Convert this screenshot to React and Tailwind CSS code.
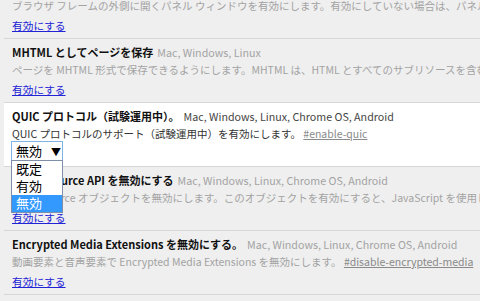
import React from 'react';

const font = { fontFamily: '"Noto Sans CJK JP", "Noto Sans", sans-serif' };

function Link({ children }) {
  return <span className="text-[#2323d6] underline">{children}</span>;
}

function Section({ title, platforms, desc, hash, active, children, className = '' }) {
  const muted = !active;
  return (
    <div
      className={`h-[64px] border-b border-[#d6d6d6] pl-[8px] pt-[5px] whitespace-nowrap ${active ? 'bg-white' : ''} ${className}`}
    >
      <div className="h-[17px] leading-[17px] text-[11px]">
        <span className="font-bold text-[#111]">{title}</span>
        <span className={`ml-[4px] text-[10.7px] ${muted ? 'text-[#a3a3a3]' : 'text-[#444]'}`}>{platforms}</span>
      </div>
      <div className={`h-[17px] leading-[17px] text-[10.5px] ${muted ? 'text-[#a3a3a3]' : 'text-[#333]'}`}>
        {desc}
        {hash && (
          <>
            {' '}
            <span className="text-[#8a8a8a] underline">{hash}</span>
          </>
        )}
      </div>
      {children || (
        <div className="mt-[3px] h-[17px] leading-[17px] text-[10.7px]">
          <Link>有効にする</Link>
        </div>
      )}
    </div>
  );
}

export default function App() {
  const platforms = 'Mac, Windows, Linux, Chrome OS, Android';
  return (
    <div className="w-[480px] h-[301px] overflow-hidden bg-[#efefef] text-[11px]" style={font}>
      <div className="ml-[4px] -mt-[25px]">
        <Section
          title="パネルを有効にする"
          platforms="Mac, Windows, Linux"
          desc="ブラウザ フレームの外側に開くパネル ウィンドウを有効にします。有効にしていない場合は、パネルを開こうとするとポップアップが表示されます。"
        />
        <Section
          title="MHTML としてページを保存"
          platforms="Mac, Windows, Linux"
          desc="ページを MHTML 形式で保存できるようにします。MHTML は、HTML とすべてのサブリソースを含む単一のテキスト ファイルです。"
        />
        <Section
          active
          className="relative z-10"
          title="QUIC プロトコル（試験運用中）。"
          platforms={platforms}
          desc="QUIC プロトコルのサポート（試験運用中）を有効にします。"
          hash="#enable-quic"
        >
          <div className="relative -mt-[1px] ml-[-1px] w-[52px]">
            <div className="h-[20px] border border-[#80b3e6] bg-white flex items-center pl-[4px] text-[13px] text-black">
              <span>無効</span>
              <span className="ml-[9px] text-[10px]">▼</span>
            </div>
            <div className="absolute left-0 top-[19px] w-[52px] border border-[#7f8fa8] bg-white text-[13px] text-black leading-[16px]">
              <div className="h-[17px] pl-[4px]">既定</div>
              <div className="h-[17px] pl-[4px]">有効</div>
              <div className="h-[17px] pl-[4px] bg-[#3399ff] text-white">無効</div>
            </div>
          </div>
        </Section>
        <Section
          title="Media Source API を無効にする"
          platforms={platforms}
          desc="MediaSource オブジェクトを無効にします。このオブジェクトを有効にすると、JavaScript を使用してメディア データを直接動画要素に送信できます。"
        />
        <Section
          title="Encrypted Media Extensions を無効にする。"
          platforms={platforms}
          desc="動画要素と音声要素で Encrypted Media Extensions を無効にします。"
          hash="#disable-encrypted-media"
        />
      </div>
    </div>
  );
}
